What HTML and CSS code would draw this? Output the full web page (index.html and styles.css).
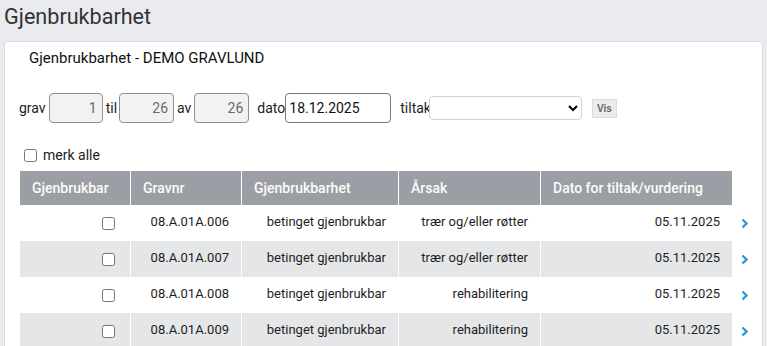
FILE: index.html
```html
<!DOCTYPE html>
<html lang="no">
<head>
<meta charset="utf-8">
<title>Gjenbrukbarhet</title>
<link rel="stylesheet" href="styles.css">
</head>
<body>
<h1 class="page-title">Gjenbrukbarhet</h1>
<div class="card">
  <div class="card-title">Gjenbrukbarhet - DEMO GRAVLUND</div>
  <div class="filters">
    <span class="lbl lbl-grav">grav</span>
    <input class="num n1" type="text" value="1" disabled>
    <span class="lbl lbl-til">til</span>
    <input class="num" type="text" value="26" disabled>
    <span class="lbl lbl-av">av</span>
    <input class="num" type="text" value="26" disabled>
    <span class="lbl lbl-dato">dato</span>
    <input class="date" type="text" value="18.12.2025">
    <span class="lbl lbl-tiltak">tiltak</span>
    <select class="tiltak"><option></option></select>
    <button class="vis" type="button">Vis</button>
  </div>
  <label class="merk"><input type="checkbox"> merk alle</label>
  <table class="grid">
    <colgroup>
      <col class="w1"><col class="w2"><col class="w3"><col class="w4"><col class="w5"><col class="w6">
    </colgroup>
    <thead>
      <tr>
        <th>Gjenbrukbar</th>
        <th>Gravnr</th>
        <th>Gjenbrukbarhet</th>
        <th>Årsak</th>
        <th>Dato for tiltak/vurdering</th>
        <th class="go"></th>
      </tr>
    </thead>
    <tbody>
      <tr>
        <td><input type="checkbox"></td>
        <td>08.A.01A.006</td>
        <td>betinget gjenbrukbar</td>
        <td>trær og/eller røtter</td>
        <td>05.11.2025</td>
        <td class="go"><svg width="8" height="11" viewBox="0 0 8 11"><polyline points="1.5,1.5 5.5,5.5 1.5,9.5" fill="none" stroke="#2b9ad6" stroke-width="2.4"/></svg></td>
      </tr>
      <tr>
        <td><input type="checkbox"></td>
        <td>08.A.01A.007</td>
        <td>betinget gjenbrukbar</td>
        <td>trær og/eller røtter</td>
        <td>05.11.2025</td>
        <td class="go"><svg width="8" height="11" viewBox="0 0 8 11"><polyline points="1.5,1.5 5.5,5.5 1.5,9.5" fill="none" stroke="#2b9ad6" stroke-width="2.4"/></svg></td>
      </tr>
      <tr>
        <td><input type="checkbox"></td>
        <td>08.A.01A.008</td>
        <td>betinget gjenbrukbar</td>
        <td>rehabilitering</td>
        <td>05.11.2025</td>
        <td class="go"><svg width="8" height="11" viewBox="0 0 8 11"><polyline points="1.5,1.5 5.5,5.5 1.5,9.5" fill="none" stroke="#2b9ad6" stroke-width="2.4"/></svg></td>
      </tr>
      <tr>
        <td><input type="checkbox"></td>
        <td>08.A.01A.009</td>
        <td>betinget gjenbrukbar</td>
        <td>rehabilitering</td>
        <td>05.11.2025</td>
        <td class="go"><svg width="8" height="11" viewBox="0 0 8 11"><polyline points="1.5,1.5 5.5,5.5 1.5,9.5" fill="none" stroke="#2b9ad6" stroke-width="2.4"/></svg></td>
      </tr>
    </tbody>
  </table>
</div>
</body>
</html>
```

FILE: styles.css
```css
html, body {
  margin: 0;
  padding: 0;
}
body {
  background: #e9ebee;
  font-family: Roboto, "Liberation Sans", sans-serif;
  font-size: 14px;
  color: #222;
  overflow: hidden;
}
.page-title {
  margin: 0 0 8px;
  padding: 0 4px;
  font-size: 21.6px;
  line-height: 33px;
  font-weight: 400;
  color: #333;
}
.card {
  margin: 0 4px;
  background: #fff;
  border: 1px solid #d9dbde;
  border-radius: 4px;
  padding: 6px 15px 40px;
}
.card-title {
  padding-left: 9px;
  line-height: 20px;
  font-size: 15px;
  color: #111;
}
.filters {
  display: flex;
  align-items: center;
  margin-top: 25px;
  margin-left: -1px;
  height: 30px;
}
.lbl {
  line-height: 20px;
  color: #222;
  white-space: nowrap;
}
.lbl-grav { margin-right: 3px; }
.lbl-til { margin: 0 2px 0 3px; }
.lbl-av { margin: 0 3px 0 3px; }
.lbl-dato { margin: 0 0 0 8px; }
.lbl-tiltak { margin: 0 -2px 0 9px; }
input.num {
  box-sizing: border-box;
  width: 55px;
  height: 30px;
  border: 1px solid #8d9197;
  border-radius: 4px;
  background: #f2f2f2;
  color: #6a6a6a;
  text-align: right;
  padding: 0 5px;
  font: 14px Roboto, "Liberation Sans", sans-serif;
}
input.num.n1 { width: 54px; }
input.date {
  box-sizing: border-box;
  width: 106px;
  height: 30px;
  border: 1px solid #72787f;
  border-radius: 4px;
  background: #fff;
  color: #111;
  padding: 0 3px;
  font: 14px Roboto, "Liberation Sans", sans-serif;
}
select.tiltak {
  box-sizing: border-box;
  width: 153px;
  height: 24px;
  border: 1px solid #cfd1d4;
  border-radius: 4px;
  background: #fff;
  font: 13px Roboto, "Liberation Sans", sans-serif;
}
.vis {
  margin-left: 10px;
  height: 19px;
  padding: 0 4px;
  border: 1px solid #dcdcdc;
  background: #ececec;
  color: #666;
  font: bold 10px "Liberation Sans", Arial, sans-serif;
  border-radius: 0;
}
.merk {
  display: flex;
  align-items: center;
  margin-top: 22px;
  height: 20px;
  line-height: 20px;
  color: #222;
}
.merk input {
  margin: 0 6px 0 4px;
  width: 13px;
  height: 13px;
}
.grid {
  margin-top: 6px;
  border-collapse: separate;
  border-spacing: 0;
  table-layout: fixed;
  width: 742px;
}
.grid .w1 { width: 110px; }
.grid .w2 { width: 111px; }
.grid .w3 { width: 157px; }
.grid .w4 { width: 142px; }
.grid .w5 { width: 192px; }
.grid .w6 { width: 30px; }
.grid th {
  background: #9b9fa5;
  color: #fbfbfb;
  font-weight: 500;
  font-size: 14px;
  text-align: left;
  height: 34px;
  padding: 0 12px;
  line-height: 18px;
  border-left: 1px solid #fff;
  white-space: nowrap;
}
.grid th:first-child { border-left: 0; }
.grid td {
  height: 34px;
  padding: 0 12px 2px;
  text-align: right;
  font-size: 13px;
  line-height: 18px;
  border-left: 1px solid #fff;
  color: #1e1e1e;
  white-space: nowrap;
}
.grid td:first-child { border-left: 0; padding-right: 12px; }
.grid td input {
  margin: 2px 3px 0 4px;
  width: 13px;
  height: 13px;
  vertical-align: middle;
}
.grid tbody tr:nth-child(even) td { background: #e5e6e8; }
.grid tbody tr td.go,
.grid th.go {
  background: transparent;
  border-left: 0;
  padding: 0 0 0 9px;
  text-align: left;
}
.grid td.go svg {
  display: block;
  margin-top: 1px;
}
```
